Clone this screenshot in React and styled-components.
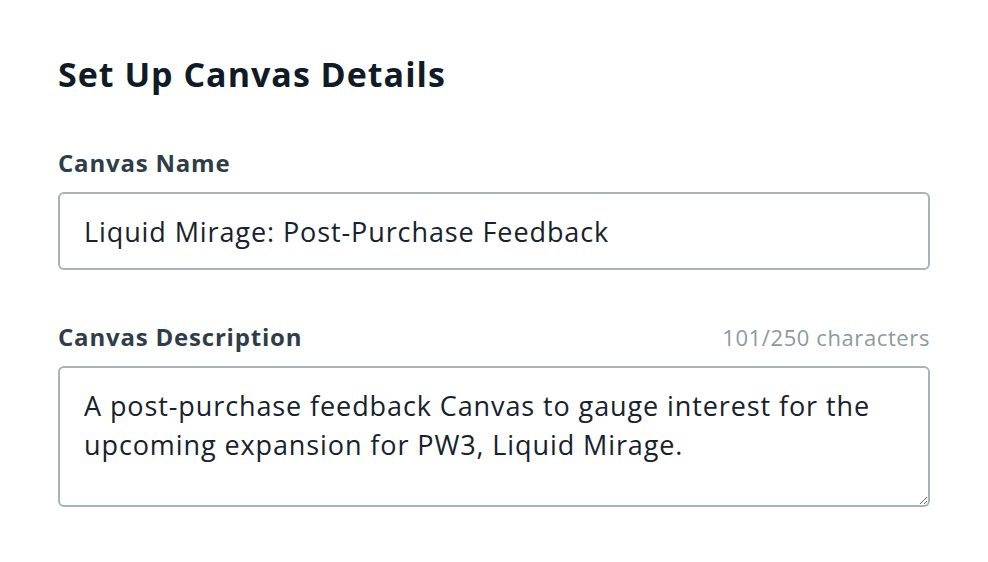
import React from 'react'
import styled, { createGlobalStyle } from 'styled-components'

const GlobalStyle = createGlobalStyle`
  html, body {
    margin: 0;
    padding: 0;
    background: #ffffff;
  }
  body {
    font-family: 'Open Sans', 'Noto Sans', sans-serif;
    -webkit-font-smoothing: antialiased;
  }
`

const Wrapper = styled.section`
  width: 872px;
  padding: 52px 58px 0;
  display: flex;
  flex-direction: column;
`

const Title = styled.h2`
  margin: 0 0 52px;
  font-size: 34px;
  line-height: 44px;
  font-weight: 700;
  letter-spacing: 1px;
  color: #0f1b26;
`

const Field = styled.div`
  display: flex;
  flex-direction: column;
  margin-bottom: ${(props) => props.$gap || '0px'};
`

const LabelRow = styled.div`
  display: flex;
  justify-content: space-between;
  align-items: baseline;
  margin-bottom: 14px;
`

const Label = styled.label`
  font-size: 24px;
  line-height: 30px;
  font-weight: 700;
  letter-spacing: 0.8px;
  color: #2e3d48;
`

const Counter = styled.span`
  font-size: 22px;
  letter-spacing: 0.6px;
  color: #8d9aa1;
`

const Input = styled.input`
  box-sizing: border-box;
  width: 100%;
  height: 78px;
  padding: 0 24px;
  border: 2px solid #a8b3b8;
  border-radius: 6px;
  font-family: inherit;
  font-size: 27px;
  letter-spacing: 0.9px;
  color: #16222c;
  outline: none;
`

const TextArea = styled.textarea`
  box-sizing: border-box;
  width: 100%;
  height: 141px;
  padding: 18px 24px;
  border: 2px solid #a8b3b8;
  border-radius: 6px;
  font-family: inherit;
  font-size: 27px;
  line-height: 39px;
  letter-spacing: 0.9px;
  color: #16222c;
  outline: none;
`

const App = () => {
  return (
    <>
      <GlobalStyle />
      <Wrapper>
        <Title>Set Up Canvas Details</Title>
        <Field $gap='52px'>
          <LabelRow>
            <Label>Canvas Name</Label>
          </LabelRow>
          <Input defaultValue='Liquid Mirage: Post-Purchase Feedback' />
        </Field>
        <Field>
          <LabelRow>
            <Label>Canvas Description</Label>
            <Counter>101/250 characters</Counter>
          </LabelRow>
          <TextArea defaultValue='A post-purchase feedback Canvas to gauge interest for the upcoming expansion for PW3, Liquid Mirage.' />
        </Field>
      </Wrapper>
    </>
  )
}

export default App
